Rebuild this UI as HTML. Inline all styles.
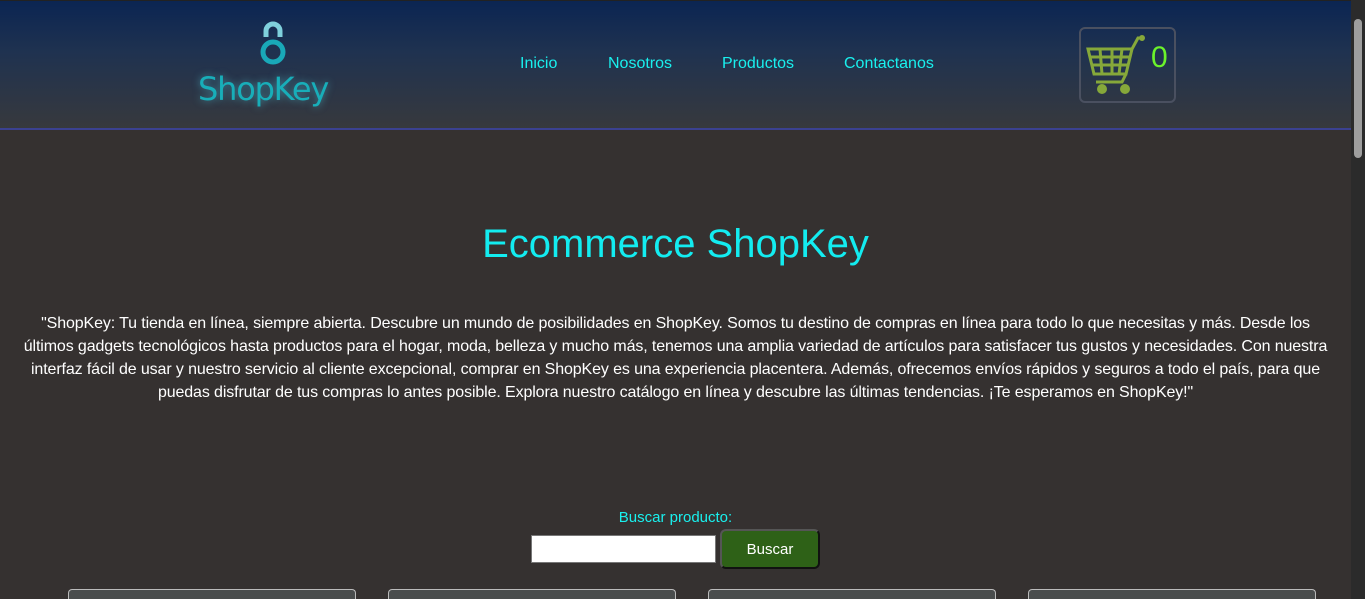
<!DOCTYPE html>
<html><head><meta charset="utf-8"><style>
*{margin:0;padding:0;box-sizing:border-box}
html,body{width:1365px;height:599px;overflow:hidden;background:#353130;font-family:"Liberation Sans",sans-serif}
.hdr{position:absolute;left:0;top:0;width:1351px;height:130px;background:linear-gradient(#0b2552,#1f3250 40%,#37393d);border-bottom:2px solid #3b4190;border-top:1px solid #222}
.nav a{position:absolute;top:54px;color:#19f0ee;font-size:16px;text-decoration:none}
.logo{position:absolute;left:198px;top:69px;color:#18aeb9;font-size:32px;text-shadow:0 0 8px rgba(80,200,220,.6);letter-spacing:-1.2px;font-family:"DejaVu Sans",sans-serif}
.cart{position:absolute;left:1079px;top:26px;width:97px;height:76px;border:2px solid #4a5060;border-radius:6px}
.cnt{position:absolute;left:1151px;top:40px;color:#6bf22b;font-size:30px}
h1{position:absolute;top:222px;left:0;width:1351px;text-align:center;color:#13ecf0;font-weight:normal;font-size:40px}
p.t{position:absolute;top:312px;left:14px;width:1323px;text-align:center;color:#fff;font-size:16px;line-height:23px;letter-spacing:-0.12px}
.lab{position:absolute;top:509px;left:0;width:1351px;text-align:center;color:#19f0ee;font-size:15px}
.inp{position:absolute;left:531px;top:535px;width:185px;height:28px;background:#fff;border:1px solid #777}
.btn{position:absolute;left:720px;top:529px;width:100px;height:40px;background:#2e6117;border:2px solid #555;border-right-color:#111;border-bottom-color:#111;border-radius:6px;color:#fff;font-size:15px;text-align:center;line-height:37px}
.card{position:absolute;top:589px;width:288px;height:10px;background:#4a4d4d;border:1px solid #bbb;border-bottom:0;border-radius:4px 4px 0 0}
.sb{position:absolute;left:1351px;top:0;width:14px;height:599px;background:#2b2b2b}
.th{position:absolute;left:1354px;top:19px;width:8px;height:139px;background:#9e9e9e;border-radius:4px}
</style></head><body>
<div class="hdr">
<svg style="position:absolute;left:258px;top:20px" width="30" height="48" viewBox="0 0 30 48"><path d="M8 16 V10 A7 7 0 0 1 22 10 V16" fill="none" stroke="#7fd0dc" stroke-width="5"/><circle cx="15" cy="31" r="10" fill="none" stroke="#19a9b8" stroke-width="5"/></svg>
<div class="logo">ShopKey</div>
<div class="nav"><a style="left:520px">Inicio</a><a style="left:608px">Nosotros</a><a style="left:722px">Productos</a><a style="left:844px">Contactanos</a></div>
<div class="cart"></div>
<svg style="position:absolute;left:1086px;top:33px" width="62" height="62" viewBox="0 0 62 62"><g fill="none" stroke="#86a83a" stroke-width="3"><path d="M2 15 L46 15 L40 40 L8 40 Z M14 15 L16 40 M26 15 L26 40 M36 15 L33 40 M4 23 L44 23 M6 31 L42 31 M46 15 L52 4 L57 4 M40 40 L36 48 L10 48"/></g><circle cx="56" cy="4" r="3" fill="#86a83a"/><circle cx="16" cy="55" r="5" fill="#86a83a"/><circle cx="39" cy="55" r="5" fill="#86a83a"/></svg>
<div class="cnt">0</div>
</div>
<h1>Ecommerce ShopKey</h1>
<p class="t">"ShopKey: Tu tienda en línea, siempre abierta. Descubre un mundo de posibilidades en ShopKey. Somos tu destino de compras en línea para todo lo que necesitas y más. Desde los<br>últimos gadgets tecnológicos hasta productos para el hogar, moda, belleza y mucho más, tenemos una amplia variedad de artículos para satisfacer tus gustos y necesidades. Con nuestra<br>interfaz fácil de usar y nuestro servicio al cliente excepcional, comprar en ShopKey es una experiencia placentera. Además, ofrecemos envíos rápidos y seguros a todo el país, para que<br>puedas disfrutar de tus compras lo antes posible. Explora nuestro catálogo en línea y descubre las últimas tendencias. ¡Te esperamos en ShopKey!"</p>
<div class="lab">Buscar producto:</div>
<div class="inp"></div>
<div class="btn">Buscar</div>
<div class="card" style="left:68px"></div><div class="card" style="left:388px"></div><div class="card" style="left:708px"></div><div class="card" style="left:1028px"></div>
<div class="sb"></div><div class="th"></div>
</body></html>
